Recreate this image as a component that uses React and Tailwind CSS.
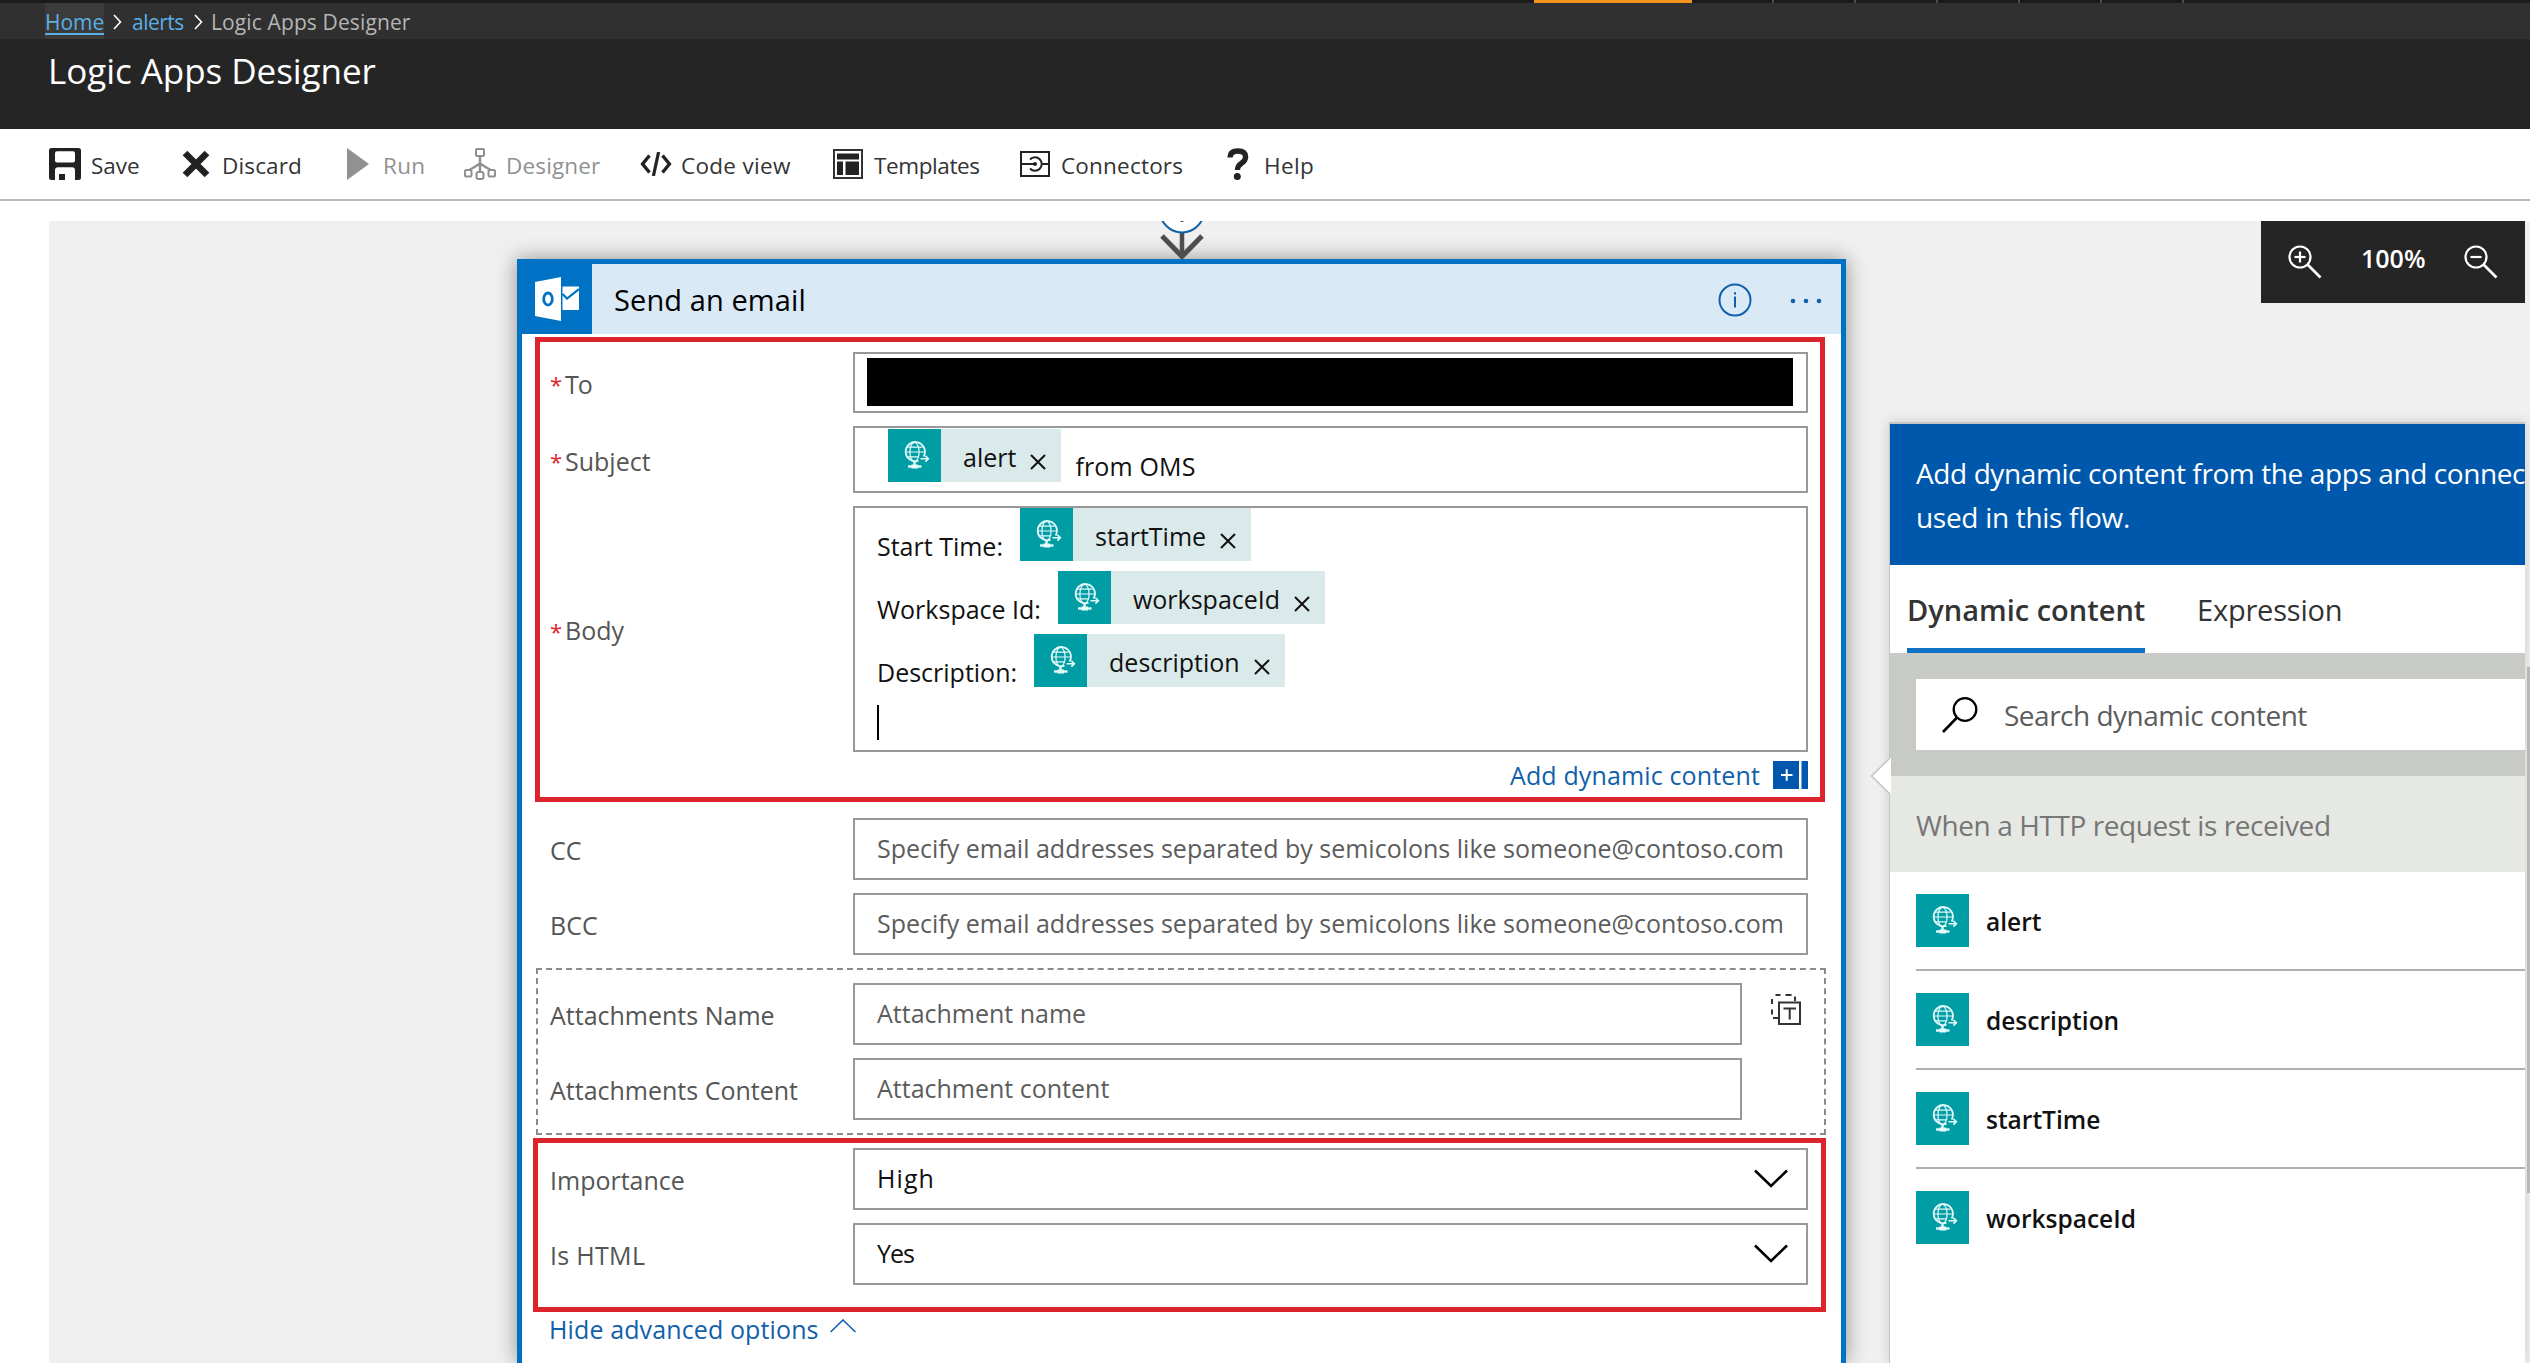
import React from "react";

/* ---------- icons ---------- */

function SaveIcon() {
  return (
    <svg width="32" height="32" viewBox="0 0 32 32">
      <path
        fillRule="evenodd"
        fill="#222"
        d="M2.5 0H29.5Q32 0 32 2.5V29.5Q32 32 29.5 32H2.5Q0 32 0 29.5V2.5Q0 0 2.5 0ZM8 3.2Q6 3.2 6 5.2V12.8Q6 14.6 8 14.6H24Q26 14.6 26 12.8V5.2Q26 3.2 24 3.2ZM9 19.2Q6 19.2 6 22.5V32H10V26H16V32H26V22.5Q26 19.2 23 19.2Z"
      />
    </svg>
  );
}

function DiscardIcon() {
  return (
    <svg width="28" height="28" viewBox="0 0 28 28">
      <path d="M3 3L25 25M25 3L3 25" stroke="#222" strokeWidth="6.6" />
    </svg>
  );
}

function RunIcon() {
  return (
    <svg width="22" height="32" viewBox="0 0 22 32">
      <path d="M0 0L22 16L0 32Z" fill="#919191" />
    </svg>
  );
}

function DesignerIcon() {
  return (
    <svg width="32" height="32" viewBox="0 0 32 32" fill="none" stroke="#8f8f8f" strokeWidth="2">
      <rect x="12" y="1" width="8" height="7" rx="1" />
      <path d="M16 8V24M16 15.5L5.5 22M16 15.5L26.5 22" strokeWidth="2.4" />
      <rect x="1" y="22" width="6.5" height="6.5" rx="1.5" fill="#fff" />
      <rect x="24.5" y="22" width="6.5" height="6.5" rx="1.5" fill="#fff" />
      <rect x="12.5" y="24" width="7" height="7" rx="2" fill="#fff" />
    </svg>
  );
}

function CodeIcon() {
  return (
    <svg width="32" height="24" viewBox="0 0 32 24" fill="none" stroke="#222" strokeWidth="3.4">
      <path d="M9.500 3.500L2.600 12L9.500 20.500M22.500 3.500L29.400 12L22.500 20.500" />
      <path d="M18.600 0L13.400 24" strokeWidth="3.200" />
    </svg>
  );
}

function TemplatesIcon() {
  return (
    <svg width="30" height="30" viewBox="0 0 30 30">
      <rect x="1" y="1" width="28" height="28" fill="#fff" stroke="#333" strokeWidth="2" />
      <rect x="4" y="4.500" width="22" height="6" fill="#222" />
      <rect x="4" y="12.500" width="6" height="13.500" fill="#222" />
      <rect x="12.500" y="12.500" width="13.500" height="13.500" fill="#222" />
    </svg>
  );
}

function ConnectorsIcon() {
  return (
    <svg width="30" height="26" viewBox="0 0 30 26" fill="none" stroke="#222" strokeWidth="2">
      <rect x="1" y="1" width="28" height="24" />
      <path d="M1 13H14M21 13H29" />
      <path d="M10 8.500Q12 6.300 15 6.300A6.700 6.700 0 0 1 15 19.700Q12 19.700 10 17.500" />
      <circle cx="15" cy="13" r="2" fill="#222" stroke="none" />
    </svg>
  );
}

function HelpIcon() {
  return (
    <svg width="22" height="32" viewBox="0 0 22 32">
      <path
        d="M3 9.500Q3.200 3 10.800 3Q18.600 3 18.600 9Q18.600 12.400 14.500 15.200Q10.500 17.800 10.500 22"
        fill="none"
        stroke="#222"
        strokeWidth="5.400"
      />
      <circle cx="10.300" cy="28.500" r="3.500" fill="#222" />
    </svg>
  );
}

function OutlookIcon() {
  return (
    <svg width="44" height="44" viewBox="0 0 44 44">
      <path d="M0 5L26 0V44L0 39Z" fill="#fff" />
      <ellipse cx="13" cy="22" rx="4.300" ry="6" fill="none" stroke="#0072c6" strokeWidth="2.800" />
      <path d="M27.500 9.500H44V33H27.500Z" fill="#fff" />
      <path d="M27.500 17L32 21.500L44 12" fill="none" stroke="#0072c6" strokeWidth="2.200" />
    </svg>
  );
}

function InfoIcon() {
  return (
    <svg width="34" height="34" viewBox="0 0 34 34" fill="none" stroke="#1160ab" strokeWidth="2">
      <circle cx="17" cy="17" r="15.500" />
      <path d="M17 13.500V24.500" />
      <path d="M17 9.200V11.400" />
    </svg>
  );
}

function MoreIcon() {
  return (
    <svg width="32" height="6" viewBox="0 0 32 6" fill="#1160ab">
      <circle cx="3" cy="3" r="2.300" />
      <circle cx="16" cy="3" r="2.300" />
      <circle cx="29" cy="3" r="2.300" />
    </svg>
  );
}

function RequestIcon() {
  return (
    <svg
      className="shrink-0 bg-[#009da5]"
      width="53"
      height="53"
      viewBox="0 0 53 53"
      fill="none"
      stroke="#e4fbfb"
      strokeWidth="1.200"
    >
      <path d="M35.600 27.500A9.600 9.600 0 1 0 30.500 31.700" strokeWidth="1.800" />
      <ellipse cx="26.500" cy="23" rx="4.600" ry="9.500" />
      <path d="M18.500 18.200H34.500M17 23H36.500M18.500 27.800H30.500" />
      <path d="M26.500 32.500V36" strokeWidth="2.400" />
      <path d="M20 37.500H33.500" strokeWidth="2.400" />
      <path d="M23.500 37.500H30" strokeWidth="4" />
      <path d="M32.500 29.700H40M37.400 26.800L40.400 29.700L37.400 32.600" strokeWidth="1.600" />
    </svg>
  );
}

function RemoveIcon() {
  return (
    <svg width="16" height="16" viewBox="0 0 16 16" stroke="#111" strokeWidth="2">
      <path d="M1 1L15 15M15 1L1 15" />
    </svg>
  );
}

function AddContentIcon() {
  return (
    <svg width="35" height="28" viewBox="0 0 35 28">
      <rect width="26" height="28" fill="#0057ad" />
      <rect x="28.500" width="6.500" height="28" fill="#0057ad" />
      <path d="M8 14H19.500M13.700 8.300V19.800" stroke="#fff" strokeWidth="2" />
    </svg>
  );
}

function ArrayModeIcon() {
  return (
    <svg width="30" height="31" viewBox="0 0 30 31" fill="none" stroke="#333" strokeWidth="2">
      <rect x="8" y="8.500" width="21" height="21.500" />
      <path d="M12.500 14.500H25M18.700 14.500V25.500" />
      <path d="M4.500 1H9.500M14.500 1H20.500M24 2.500V7M1 5V10M1 15.500V20.500M2 24H7" />
    </svg>
  );
}

function ChevronDown() {
  return (
    <svg width="34" height="20" viewBox="0 0 34 20" fill="none" stroke="#000" strokeWidth="2.600">
      <path d="M1 1.500L17 17L33 1.500" />
    </svg>
  );
}

function ChevronUp() {
  return (
    <svg width="26" height="14" viewBox="0 0 26 14" fill="none" stroke="#1160ab" strokeWidth="1.600">
      <path d="M.6 13L13 1L25.400 13" />
    </svg>
  );
}

function ZoomIcon({ plus }) {
  return (
    <svg width="34" height="34" viewBox="0 0 34 34" fill="none" stroke="#fff" strokeWidth="2.200">
      <circle cx="12" cy="12" r="10.500" />
      <path d="M19.500 19.500L32.500 32.500" strokeWidth="2.600" />
      <path d="M6.500 12H17.500" />
      {plus && <path d="M12 6.500V17.500" />}
    </svg>
  );
}

function SearchIcon() {
  return (
    <svg width="36" height="36" viewBox="0 0 36 36" fill="none" stroke="#000" strokeWidth="2.300">
      <circle cx="23" cy="12.500" r="11.300" />
      <path d="M15 20.500L1 35" strokeWidth="2.600" />
    </svg>
  );
}

/* ---------- building blocks ---------- */

const COMMANDS = [
  { label: "Save", Icon: SaveIcon, box: "w-[42px]", text: "text-[#333]" },
  { label: "Discard", Icon: DiscardIcon, box: "w-[40px]", text: "text-[#333] tracking-[0.15px]" },
  { label: "Run", Icon: RunIcon, box: "w-[36px]", text: "text-[#919191] tracking-[0.3px]" },
  { label: "Designer", Icon: DesignerIcon, box: "w-[42px]", text: "text-[#919191] tracking-[0.15px]" },
  { label: "Code view", Icon: CodeIcon, box: "w-[41px]", text: "text-[#333] tracking-[0.3px]" },
  { label: "Templates", Icon: TemplatesIcon, box: "w-[41px]", text: "text-[#333] tracking-[-0.4px]" },
  { label: "Connectors", Icon: ConnectorsIcon, box: "w-[41px]", text: "text-[#333] tracking-[0.2px]" },
  { label: "Help", Icon: HelpIcon, box: "w-[37px]", text: "text-[#333] tracking-[0.4px]" },
];

function Token({ name, className = "" }) {
  return (
    <span className={"flex h-[53px] items-center bg-[#daeaeb] pr-[15px] " + className}>
      <RequestIcon />
      <span className="ml-[22px] pt-[2px] leading-[34px]">{name}</span>
      <span className="ml-[14px] mt-[12px]">
        <RemoveIcon />
      </span>
    </span>
  );
}

function Field({ label, required, height = "h-[62px]", width = "w-[955px]", track = "", children }) {
  return (
    <div className={"flex " + height}>
      <div className={"flex w-[303px] shrink-0 items-center pt-[4px] text-[#555] " + track}>
        {required && <span className="w-[15px] text-[22px] tracking-normal text-[#e0232e]">*</span>}
        {label}
      </div>
      <div className={"flex shrink-0 border-2 border-[#999] bg-white " + width}>{children}</div>
    </div>
  );
}

function Placeholder({ children, className = "" }) {
  return <span className={"self-center whitespace-nowrap pb-px pl-[22px] text-[#5c5c5c] " + className}>{children}</span>;
}

function BodyLine({ text, token }) {
  return (
    <div className="flex h-[63px]">
      <span className="mt-[21px] leading-[34px]">{text}</span>
      <Token name={token} className="ml-[17px]" />
    </div>
  );
}

function SelectValue({ children, className = "" }) {
  return (
    <div className="flex flex-1 items-center justify-between pl-[22px] pr-[18px]">
      <span className={"pb-px text-[#111] " + className}>{children}</span>
      <ChevronDown />
    </div>
  );
}

/* ---------- regions ---------- */

function TopBars() {
  return (
    <header className="text-white">
      <div className="flex h-[3px] bg-[#1b1b1b] pl-[1534px]">
        <div className="w-[158px] bg-[#f7941e]" />
        {[0, 1, 2, 3, 4, 5].map((i) => (
          <div key={i} className="w-[82px] border-r-2 border-[#4a4a4a]" />
        ))}
      </div>
      <nav className="flex h-[36px] items-center bg-[#303030] pl-[45px] pt-[2px] text-[21px] leading-[30px]">
        <span className="-mt-[2px] h-[36px] w-[59px] bg-[#3b3b3b] pt-[4px]">
          <span className="block h-[28px] border-b-2 border-[#5caee5] text-[#5caee5]">Home</span>
        </span>
        <svg className="ml-[9px]" width="9" height="16" viewBox="0 0 9 16" fill="none" stroke="#fff" strokeWidth="1.600">
          <path d="M1 1L7.500 8L1 15" />
        </svg>
        <span className="ml-[10px] w-[52px] tracking-[-0.5px] text-[#5caee5]">alerts</span>
        <svg className="ml-[10px]" width="9" height="16" viewBox="0 0 9 16" fill="none" stroke="#fff" strokeWidth="1.600">
          <path d="M1 1L7.500 8L1 15" />
        </svg>
        <span className="ml-[8px] tracking-[0.12px] text-[#b5b5b5]">Logic Apps Designer</span>
      </nav>
      <div className="h-[90px] bg-[#252525] pl-[48px] pt-[10px]">
        <h1 className="text-[35px] leading-[43px] tracking-[-0.05px]">Logic Apps Designer</h1>
      </div>
    </header>
  );
}

function CommandBar() {
  return (
    <div className="grid h-[72px] shrink-0 grid-cols-[133px_165px_117px_176px_193px_187px_207px_auto] border-b-2 border-[#b9b9b9] bg-white pl-[49px] text-[22.5px]">
      {COMMANDS.map(({ label, Icon, box, text }) => (
        <div key={label} className="flex items-center">
          <span className={box}>
            <Icon />
          </span>
          <span className={"whitespace-nowrap pt-[3px] " + text}>{label}</span>
        </div>
      ))}
    </div>
  );
}

function EmailCard() {
  return (
    <section className="flex-1 border-x-[5px] border-t-[5px] border-[#0072c6] bg-white text-[25px] text-[#111] shadow-[0_0_20px_rgba(0,0,0,0.4)]">
      <div className="flex h-[70px] items-center bg-[#dae9f6] pr-[19px]">
        <div className="flex h-[70px] w-[70px] items-center justify-center bg-[#0072c6]">
          <OutlookIcon />
        </div>
        <h2 className="ml-[22px] flex-1 pt-[2px] text-[29px] tracking-[0.1px] text-black">Send an email</h2>
        <span className="mt-[2px]">
          <InfoIcon />
        </span>
        <span className="ml-[38px] mt-[4px]">
          <MoreIcon />
        </span>
      </div>

      <div className="ml-[13px] mt-[3px] h-[465px] w-[1290px] border-[5px] border-[#dc242c] pl-[10px] pt-[10px]">
        <div className="flex flex-col gap-[13px]">
          <Field label="To" required height="h-[61px]" track="tracking-[-1px]">
            <div className="ml-[12px] mt-[4px] h-[48px] w-[926px] bg-black" />
          </Field>
          <Field label="Subject" required height="h-[67px]">
            <Token name="alert" className="ml-[33px] mt-px" />
            <span className="ml-[14px] mt-[21px] leading-[34px] tracking-[0.15px]">from OMS</span>
          </Field>
          <Field label="Body" required height="h-[246px]">
            <div className="pl-[22px]">
              <BodyLine text="Start Time:" token="startTime" />
              <BodyLine text="Workspace Id:" token="workspaceId" />
              <BodyLine text="Description:" token="description" />
              <div className="mt-[8px] h-[35px] w-[2px] bg-black" />
            </div>
          </Field>
        </div>
        <div className="mt-[9px] flex h-[28px] w-[1258px] items-center justify-end gap-[13px]">
          <span className="pt-px tracking-[0.14px] text-[#1160ab]">Add dynamic content</span>
          <AddContentIcon />
        </div>
      </div>

      <div className="ml-[28px] mt-[16px] flex flex-col gap-[13px]">
        <Field label="CC">
          <Placeholder>Specify email addresses separated by semicolons like someone@contoso.com</Placeholder>
        </Field>
        <Field label="BCC">
          <Placeholder>Specify email addresses separated by semicolons like someone@contoso.com</Placeholder>
        </Field>
      </div>

      <div className="ml-[14px] mt-[13px] flex h-[167px] w-[1290px] gap-[29px] border-2 border-dashed border-[#8a8a8a] pl-[12px] pt-[13px]">
        <div className="flex flex-col gap-[13px]">
          <Field label="Attachments Name" width="w-[889px]">
            <Placeholder>Attachment name</Placeholder>
          </Field>
          <Field label="Attachments Content" width="w-[889px]">
            <Placeholder>Attachment content</Placeholder>
          </Field>
        </div>
        <span className="mt-[11px]">
          <ArrayModeIcon />
        </span>
      </div>

      <div className="ml-[11px] mt-[3px] flex h-[174px] w-[1293px] flex-col gap-[13px] border-[5px] border-[#dc242c] pl-[12px] pt-[5px]">
        <Field label="Importance">
          <SelectValue className="tracking-[1.1px]">High</SelectValue>
        </Field>
        <Field label="Is HTML" track="tracking-[0.3px]">
          <SelectValue className="tracking-[-1px]">Yes</SelectValue>
        </Field>
      </div>

      <div className="ml-[27px] flex h-[35px] items-center gap-[11px] leading-[35px] tracking-[0.12px] text-[#1160ab]">
        Hide advanced options
        <span className="-mt-[8px]">
          <ChevronUp />
        </span>
      </div>
    </section>
  );
}

function FlowArrow() {
  return (
    <svg className="relative z-10 mx-auto block" width="46" height="38" viewBox="0 0 46 38">
      <path d="M23 12V36" stroke="#4d4d4d" strokeWidth="4.500" />
      <path d="M3 15L23 35.500L43 15" fill="none" stroke="#4d4d4d" strokeWidth="5" />
      <circle cx="23" cy="-10.500" r="22" fill="#fff" stroke="#0f62a8" strokeWidth="2" />
      <path d="M21.500 .5H24.500" stroke="#555" strokeWidth="1" />
    </svg>
  );
}

function DynamicContentPanel() {
  return (
    <aside className="relative mt-[119px] flex-1 border-l border-t-2 border-[#c4c6c6] bg-white shadow-[0_0_12px_rgba(0,0,0,0.15)]">
      <svg className="absolute -left-[20px] top-[333px]" width="21" height="38" viewBox="0 0 21 38">
        <path d="M20 1L1.500 19L20 37" fill="#fff" stroke="#c4c6c6" strokeWidth="1.600" />
        <path d="M20 1H21V37H20Z" fill="#fff" />
      </svg>
      <div className="h-[141px] bg-[#0058ad] pl-[26px] pt-[27px] text-[28px] leading-[44px] text-white">
        <div className="whitespace-nowrap tracking-[-0.4px]">Add dynamic content from the apps and connec</div>
        <div className="tracking-[-0.3px]">used in this flow.</div>
      </div>
      <div className="flex h-[88px] whitespace-nowrap pl-[17px] text-[29px] text-[#333]">
        <div className="h-[88px] w-[238px] border-b-[5px] border-[#0f72c4] font-semibold leading-[89px]">
          Dynamic content
        </div>
        <div className="ml-[52px] leading-[89px] tracking-[-0.2px]">Expression</div>
      </div>
      <div className="h-[123px] bg-[#c8cac6] py-[26px] pl-[26px]">
        <div className="flex h-[71px] items-center bg-white pl-[26px] text-[28px] tracking-[-0.5px] text-[#5c5c5c]">
          <SearchIcon />
          <span className="ml-[26px]">Search dynamic content</span>
        </div>
      </div>
      <div className="h-[96px] bg-[#e6e8e4] pl-[26px] pt-[2px] text-[28px] leading-[95px] tracking-[-0.41px] text-[#767676]">
        When a HTTP request is received
      </div>
      <ul className="pl-[26px]">
        {["alert", "description", "startTime", "workspaceId"].map((name) => (
          <li
            key={name}
            className="flex h-[99px] items-center gap-[17px] border-b-2 border-[#b0b0b0] text-[24.5px] font-semibold text-[#111] last:border-transparent"
          >
            <RequestIcon />
            <span className="pt-[3px]">{name}</span>
          </li>
        ))}
      </ul>
    </aside>
  );
}

export default function App() {
  return (
    <div className="flex h-[1363px] w-[2530px] flex-col overflow-hidden bg-white font-['Open_Sans',sans-serif]">
      <TopBars />
      <CommandBar />
      <main className="relative ml-[49px] mt-[20px] flex flex-1 bg-[#f0f0f0] pl-[468px]">
        <div className="flex w-[1329px] shrink-0 flex-col">
          <FlowArrow />
          <EmailCard />
        </div>
        <div className="ml-[43px] flex w-[636px] shrink-0 flex-col">
          <div className="flex h-[82px] w-[264px] shrink-0 items-center self-end bg-[#252525] pl-[27px]">
            <ZoomIcon plus />
            <span className="ml-[39px] w-[64px] pb-[6px] text-[25px] font-semibold text-white">100%</span>
            <span className="ml-[39px]">
              <ZoomIcon />
            </span>
          </div>
          <DynamicContentPanel />
        </div>
        <div className="absolute right-0 top-[446px] h-[526px] w-[3px] bg-[#b8b8b8]" />
      </main>
    </div>
  );
}
